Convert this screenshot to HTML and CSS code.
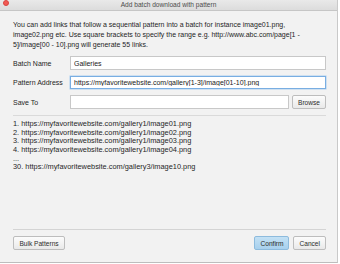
FILE: index.html
```html
<!DOCTYPE html>
<html lang="en">
<head>
    <meta charset="UTF-8">
    <title>Add batch download with pattern</title>
    <link rel="stylesheet" href="styles.css">
</head>
<body>
    <div class="window">
        <div class="titlebar">
            <span class="close-dot"></span>
            <span class="title">Add batch download with pattern</span>
            <span class="spacer"></span>
        </div>
        <div class="content">
            <p class="intro">You can add links that follow a sequential pattern into a batch for instance image01.png, image02.png etc. Use square brackets to specify the range e.g. http://www.abc.com/page[1 - 5]/image[00 - 10].png will generate 55 links.</p>

            <div class="form">
                <div class="form-row">
                    <label for="batchName">Batch Name</label>
                    <input type="text" id="batchName" value="Galleries">
                </div>
                <div class="form-row">
                    <label for="pattern">Pattern Address</label>
                    <input type="text" id="pattern" class="focused" value="https://myfavoritewebsite.com/gallery[1-3]/image[01-10].png">
                </div>
                <div class="form-row">
                    <label for="saveTo">Save To</label>
                    <input type="text" id="saveTo">
                    <button class="btn browse">Browse</button>
                </div>
            </div>

            <div class="preview">
                <div>1. https://myfavoritewebsite.com/gallery1/image01.png</div>
                <div>2. https://myfavoritewebsite.com/gallery1/image02.png</div>
                <div>3. https://myfavoritewebsite.com/gallery1/image03.png</div>
                <div>4. https://myfavoritewebsite.com/gallery1/image04.png</div>
                <div>...</div>
                <div>30. https://myfavoritewebsite.com/gallery3/image10.png</div>
            </div>

            <div class="footer">
                <button class="btn bulk">Bulk Patterns</button>
                <div class="footer-right">
                    <button class="btn primary">Confirm</button>
                    <button class="btn">Cancel</button>
                </div>
            </div>
        </div>
    </div>
</body>
</html>
```

FILE: styles.css
```css
* {
    margin: 0;
    padding: 0;
    box-sizing: border-box;
    font-family: 'Liberation Sans', Arial, sans-serif;
}

body {
    background-color: #ffffff;
}

.window {
    width: 338px;
    height: 263px;
    background-color: #f2f2f2;
    border-right: 1px solid #c9c9c9;
    border-bottom: 1px solid #bdbdbd;
    display: flex;
    flex-direction: column;
}

.titlebar {
    height: 11px;
    display: flex;
    align-items: flex-start;
    background: linear-gradient(#e9e9e9, #dcdcdc);
    border-bottom: 1px solid #c6c6c6;
    padding: 0 3px;
}

.close-dot {
    width: 6px;
    height: 6px;
    border-radius: 50%;
    background-color: #f25a55;
    border: 0.5px solid #d9443f;
}

.spacer {
    width: 6px;
}

.title {
    flex: 1;
    text-align: center;
    font-size: 6.6px;
    line-height: 10px;
    color: #4c4c4c;
}

.content {
    flex: 1;
    display: flex;
    flex-direction: column;
    padding: 9px 11px 12px 13px;
}

.intro {
    font-size: 7px;
    line-height: 9.8px;
    color: #1e1e1e;
}

.form {
    margin-top: 7px;
    display: flex;
    flex-direction: column;
    gap: 6px;
}

.form-row {
    display: flex;
    align-items: center;
    height: 13.5px;
}

.form-row label {
    width: 57px;
    font-size: 7px;
    color: #262626;
}

.form-row input {
    flex: 1;
    height: 13.5px;
    border: 1px solid #c8c8c8;
    background-color: #ffffff;
    font-size: 7px;
    padding: 0 3px;
    color: #1a1a1a;
}

.form-row input.focused {
    border-color: #79aee2;
    box-shadow: 0 0 0 0.5px #a9cdf0;
    outline: none;
}

.btn {
    height: 14px;
    padding: 0 5px;
    font-size: 6.6px;
    color: #2b2b2b;
    background: linear-gradient(#fcfcfc, #e9e9e9);
    border: 1px solid #bdbdbd;
    border-radius: 2px;
}

.browse {
    margin-left: 3px;
    width: 34px;
}

.bulk {
    width: 52px;
}

.preview {
    margin-top: 6px;
    border-top: 1px solid #dadada;
    padding-top: 4px;
    font-size: 7.4px;
    line-height: 8.7px;
    color: #262626;
    flex: 1;
}

.footer {
    border-top: 1px solid #d4d4d4;
    padding-top: 6px;
    display: flex;
    justify-content: space-between;
}

.footer-right {
    display: flex;
    gap: 4px;
}

.primary {
    background: linear-gradient(#c3e1f5, #a7d0ed);
    border-color: #8dbbdd;
    width: 35px;
}
```
